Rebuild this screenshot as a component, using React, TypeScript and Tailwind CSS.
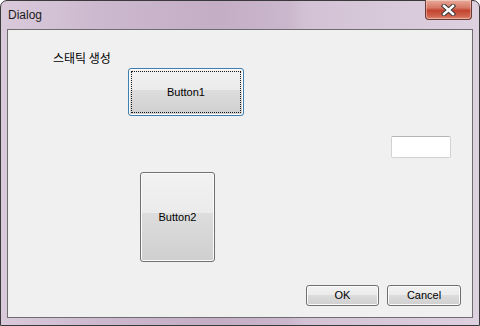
import React from 'react';

// --- Win7 style push button ---
const WinButton: React.FC<{ label: string; className?: string; focused?: boolean }> = ({ label, className = '', focused }) => (
  <button
    className={`relative flex items-center justify-center rounded-[3px] border text-[11px] text-black shadow-[inset_0_0_0_1px_#fbfbfb] bg-[linear-gradient(180deg,#f2f2f2_0%,#ebebeb_45%,#dddddd_45%,#cfcfcf_100%)] ${focused ? 'border-[#3c7fb1]' : 'border-[#707070]'} ${className}`}
    style={{ fontFamily: '"Liberation Sans", Arial, sans-serif' }}
  >
    {focused && <span className="absolute inset-[2px] border border-dotted border-[#1a1a1a]" />}
    <span className="leading-none">{label}</span>
  </button>
);

// --- Caption close button ---
const CloseButton = () => (
  <div className="-mt-px flex h-[20px] w-[47px] items-center justify-center rounded-b-[4px] border border-t-0 border-[#6b3a33] bg-[linear-gradient(180deg,#e9a999_0%,#d67a66_40%,#c24430_55%,#d0644e_85%,#e08a72_100%)] shadow-[inset_0_0_0_1px_rgba(255,255,255,0.35)]">
    <svg width="15" height="12" viewBox="0 0 15 12">
      <path d="M3 2 L12 10 M12 2 L3 10" stroke="#3b3b3b" strokeWidth="4.5" strokeLinecap="square" />
      <path d="M3 2 L12 10 M12 2 L3 10" stroke="#ffffff" strokeWidth="2.5" strokeLinecap="square" />
    </svg>
  </div>
);

export default function App() {
  return (
    <div className="h-[326px] w-[480px] overflow-hidden bg-white">
      <div className="flex h-full w-full flex-col rounded-t-[7px] border border-[#3a3a3a] bg-[linear-gradient(90deg,#d9cadb_0%,#cdb9cf_20%,#c3aec5_45%,#cbb7cd_60%,#d3c2d5_64%,#d7c8da_80%,#ddd0df_100%)]">
        {/* Title bar */}
        <div className="flex h-[28px] shrink-0 items-start justify-between pl-[7px] pr-[7px]">
          <span
            className="mt-[7px] text-[12px] leading-[15px] text-[#1b1b1b]"
            style={{ fontFamily: '"Liberation Sans", Arial, sans-serif' }}
          >
            Dialog
          </span>
          <CloseButton />
        </div>

        {/* Client area */}
        <div className="mx-[6px] mb-[7px] flex flex-1 flex-col border border-[#6d6d6d] bg-[#f0f0f0]">
          <span
            className="ml-[45px] mt-[20px] text-[12px] leading-[16px] text-black"
            style={{ fontFamily: '"Noto Sans CJK KR", "Noto Sans", sans-serif' }}
          >
            스태틱 생성
          </span>
          <WinButton label="Button1" focused className="ml-[120px] mt-[2px] h-[48px] w-[116px]" />
          <div className="ml-[383px] mt-[20px] h-[22px] w-[60px] rounded-[2px] border border-[#d2d2d2] border-t-[#b5b5b5] bg-white" />
          <WinButton label="Button2" className="ml-[132px] mt-[14px] h-[90px] w-[75px]" />
          <div className="ml-[298px] mt-[23px] flex gap-[8px]">
            <WinButton label="OK" className="h-[21px] w-[73px]" />
            <WinButton label="Cancel" className="h-[21px] w-[74px]" />
          </div>
        </div>
      </div>
    </div>
  );
}
